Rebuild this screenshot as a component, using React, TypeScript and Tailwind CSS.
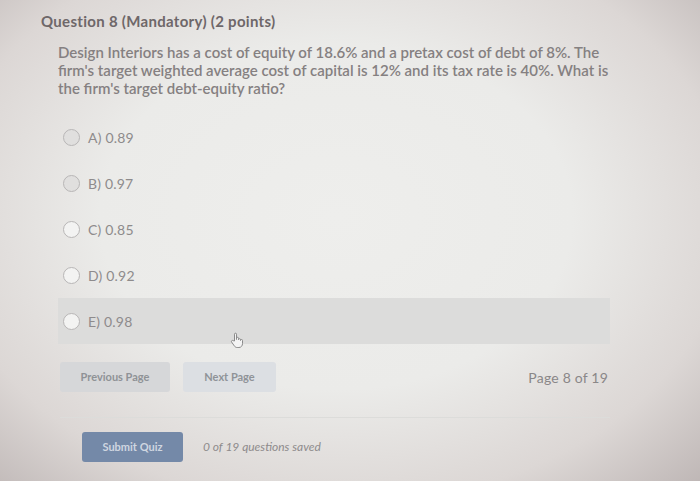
import React from 'react';

const options = [
  { id: 'a', label: 'A) 0.89', filled: true },
  { id: 'b', label: 'B) 0.97', filled: true },
  { id: 'c', label: 'C) 0.85', filled: false },
  { id: 'd', label: 'D) 0.92', filled: false },
  { id: 'e', label: 'E) 0.98', filled: false, hover: true },
];

const HandCursor = () => (
  <svg width="14" height="16" viewBox="0 0 14 16" fill="#f4f4f4" stroke="#8a8a8a" strokeWidth="1" strokeLinejoin="round">
    <path d="M4.5 9V2.2a1 1 0 0 1 2 0V7.5V6.3a1 1 0 0 1 2 0v1.4a1 1 0 0 1 2 0v.8a1 1 0 0 1 2 0v3.2c0 2-1.4 3.8-3.6 3.8H7.2c-1.3 0-2.2-.6-2.9-1.6L1.6 10a1 1 0 0 1 1.5-1.3z" />
  </svg>
);

export default function App() {
  return (
    <div
      className="relative w-[700px] h-[481px] overflow-hidden bg-[radial-gradient(ellipse_75%_80%_at_48%_45%,#eeeeec_0%,#ebebe9_45%,#dcd7d5_75%,#bcb4b3_100%)] pt-[12px] text-[#7d7879]"
      style={{ fontFamily: 'Lato, "Open Sans", sans-serif' }}
    >
      {/* Header */}
      <h1 className="ml-[41px] text-[15px] leading-[18px] font-bold tracking-[0.3px] text-[#6e6769]">
        Question 8 (Mandatory) (2 points)
      </h1>

      <p className="ml-[58px] mt-[13px] w-[560px] text-[15px] leading-[18px] font-semibold text-[#858081]">
        Design Interiors has a cost of equity of 18.6% and a pretax cost of debt of 8%. The firm's target weighted
        average cost of capital is 12% and its tax rate is 40%. What is the firm's target debt-equity ratio?
      </p>

      {/* Options */}
      <div className="ml-[58px] mt-[17px] w-[552px] flex flex-col">
        {options.map((opt) => (
          <div
            key={opt.id}
            className={`flex h-[46px] items-center gap-[8px] pl-[5px] ${opt.hover ? 'bg-[#dcdcdb]' : ''}`}
          >
            <span
              className={`h-[17px] w-[17px] rounded-full border-[1.5px] border-[#b8b6b6] ${opt.filled ? 'bg-[#e0dfde]' : 'bg-[#f3f3f2]'}`}
            />
            <span className="text-[14px] tracking-[0.2px] text-[#8e8b8c]">{opt.label}</span>
          </div>
        ))}
      </div>

      <div className="absolute left-[230px] top-[332px]">
        <HandCursor />
      </div>

      {/* Paging */}
      <div className="ml-[60px] mt-[18px] w-[548px] flex items-center">
        <button className="h-[30px] w-[110px] rounded-[3px] bg-[#d6d7d9] text-[11px] font-bold text-[#8f9296]">
          Previous Page
        </button>
        <button className="ml-[13px] h-[30px] w-[93px] rounded-[3px] bg-[#dcdfe3] text-[11px] font-bold text-[#8f9398]">
          Next Page
        </button>
        <span className="ml-auto text-[14px] tracking-[0.2px] text-[#8a8788]">Page 8 of 19</span>
      </div>

      <div className="ml-[60px] mt-[25px] w-[550px] border-t border-[#dcdcda]" />

      {/* Submit */}
      <div className="ml-[82px] mt-[14px] flex items-center gap-[20px]">
        <button className="h-[30px] w-[101px] rounded-[3px] bg-[#7489a8] text-[11px] font-bold text-[#cfd6e0]">
          Submit Quiz
        </button>
        <span className="text-[12px] italic text-[#8e8b8c]">0 of 19 questions saved</span>
      </div>
    </div>
  );
}
